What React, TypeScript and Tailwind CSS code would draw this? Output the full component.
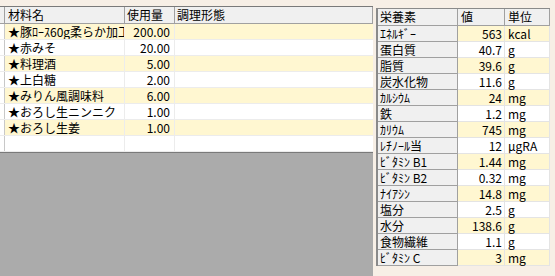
import React from "react";

const font = { fontFamily: '"MS UI Gothic","Noto Sans CJK JP","Noto Sans",sans-serif' };

const ingredients: [string, string][] = [
  ["★豚ﾛｰｽ60g柔らか加工", "200.00"],
  ["★赤みそ", "20.00"],
  ["★料理酒", "5.00"],
  ["★上白糖", "2.00"],
  ["★みりん風調味料", "6.00"],
  ["★おろし生ニンニク", "1.00"],
  ["★おろし生姜", "1.00"],
  ["", ""],
];

const nutrients: [string, string, string][] = [
  ["ｴﾈﾙｷﾞｰ", "563", "kcal"],
  ["蛋白質", "40.7", "g"],
  ["脂質", "39.6", "g"],
  ["炭水化物", "11.6", "g"],
  ["ｶﾙｼｳﾑ", "24", "mg"],
  ["鉄", "1.2", "mg"],
  ["ｶﾘｳﾑ", "745", "mg"],
  ["ﾚﾁﾉｰﾙ当", "12", "μgRA"],
  ["ﾋﾞﾀﾐﾝ B1", "1.44", "mg"],
  ["ﾋﾞﾀﾐﾝ B2", "0.32", "mg"],
  ["ﾅｲｱｼﾝ", "14.8", "mg"],
  ["塩分", "2.5", "g"],
  ["水分", "138.6", "g"],
  ["食物繊維", "1.1", "g"],
  ["ﾋﾞﾀﾐﾝ C", "3", "mg"],
];

export default function App() {
  return (
    <div
      className="w-[555px] h-[276px] bg-[#f7efe6] flex overflow-hidden text-[12px] leading-[15px] text-black"
      style={font}
    >
      {/* left panel */}
      <div className="w-[373px] flex flex-col">
        <div className="h-[6px] shrink-0" />
        <div className="flex flex-col border-t border-[#7a7a7a]">
          {/* header */}
          <div className="flex h-[17px] bg-[#f0f0f0] border-b border-[#a0a0a0]">
            <div className="w-[5px] border-r border-[#a0a0a0]" />
            <div className="w-[120px] border-r border-[#a0a0a0] pl-[3px] whitespace-nowrap overflow-hidden">材料名</div>
            <div className="w-[50px] border-r border-[#a0a0a0] pl-[2px] whitespace-nowrap overflow-hidden">使用量</div>
            <div className="flex-1 pl-[2px] border-r border-[#a0a0a0] whitespace-nowrap">調理形態</div>
          </div>
          {ingredients.map(([n, v], i) => (
            <div key={i} className="flex h-[16px] border-b border-[#ececec]">
              <div className="w-[5px] bg-white border-r border-[#c8c8c8]" />
              <div
                className={`w-[120px] border-r border-[#ececec] pl-[3px] whitespace-nowrap overflow-hidden ${i % 2 === 0 && n ? "bg-[#fff7d1]" : "bg-white"}`}
              >
                {n}
              </div>
              <div
                className={`w-[50px] border-r border-[#ececec] pr-[4px] text-right whitespace-nowrap ${i % 2 === 0 && n ? "bg-[#fff7d1]" : "bg-white"}`}
              >
                {v}
              </div>
              <div className={`flex-1 ${i % 2 === 0 && n ? "bg-[#fff7d1]" : "bg-white"}`} />
            </div>
          ))}
        </div>
        <div className="flex-1 bg-[#ababab] border-t border-[#7a7a7a]" />
      </div>

      {/* right panel */}
      <div className="flex-1 pl-[3px] pt-[8px]">
        <div className="w-[174px] border-t border-l-2 border-[#8a8a8a] flex flex-col">
          <div className="flex h-[17px] bg-[#f0f0f0] border-b border-[#a0a0a0]">
            <div className="w-[80px] border-r border-[#a0a0a0] pl-[2px] whitespace-nowrap">栄養素</div>
            <div className="w-[47px] border-r border-[#a0a0a0] pl-[3px]">値</div>
            <div className="flex-1 pl-[3px] border-r border-[#a0a0a0]">単位</div>
          </div>
          {nutrients.map(([n, v, u], i) => {
            const bg = i % 2 === 0 ? "bg-[#fff7d1]" : "bg-white";
            return (
              <div key={i} className="flex h-[16px]">
                <div className="w-[80px] bg-[#f0f0f0] border-r border-b border-[#a0a0a0] pl-[2px] whitespace-nowrap overflow-hidden">
                  {n}
                </div>
                <div className={`w-[47px] ${bg} border-r border-b border-[#e4e4e4] pr-[2px] text-right`}>{v}</div>
                <div className={`flex-1 ${bg} border-r border-b border-[#e4e4e4] pl-[3px]`}>{u}</div>
              </div>
            );
          })}
        </div>
      </div>
    </div>
  );
}
